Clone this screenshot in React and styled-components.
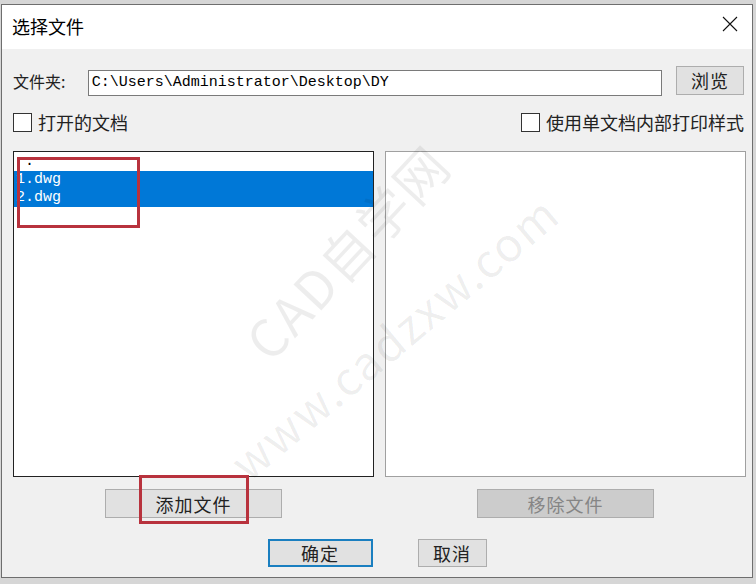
import React from 'react';
import styled, { createGlobalStyle } from 'styled-components';

const GlobalStyle = createGlobalStyle`
  html, body {
    margin: 0;
    padding: 0;
    background: #d6d6d6;
    width: 756px;
    height: 584px;
    overflow: hidden;
  }
`;

const cjk = `"Noto Sans CJK SC", "Noto Sans", sans-serif`;
const mono = `"Liberation Mono", "Noto Sans CJK SC", monospace`;

const Window = styled.div`
  position: relative;
  margin: 4px 0 0 1px;
  width: 750px;
  border: 1px solid #6e6e6e;
  background: #f0f0f0;
  font-family: ${cjk};
  color: #000;
  overflow: hidden;
`;

const TitleBar = styled.div`
  height: 44px;
  background: #fff;
  display: flex;
  align-items: center;
  justify-content: space-between;
  padding: 0 14px 0 10px;
`;

const Title = styled.div`
  font-size: 18px;
  line-height: 1;
  margin-top: -2px;
`;

const CloseButton = styled.div`
  width: 16px;
  height: 16px;
  display: flex;
  margin-top: -6px;
`;

const Body = styled.div`
  padding: 17px 8px 10px 11px;
  display: flex;
  flex-direction: column;
`;

const PathRow = styled.div`
  height: 30px;
  display: flex;
  align-items: center;
`;

const Label = styled.div`
  width: 75px;
  font-size: 16px;
  color: #222;
`;

const PathInput = styled.div`
  width: 571px;
  height: 24px;
  margin-top: 4px;
  border: 1px solid #7a7a7a;
  background: #fff;
  font-family: ${mono};
  font-size: 15px;
  line-height: 24px;
  padding-left: 3px;
  box-sizing: content-box;
  white-space: nowrap;
`;

const Button = styled.div`
  width: ${p => p.$w}px;
  height: ${p => p.$h}px;
  box-sizing: border-box;
  border: ${p => (p.$default ? '2px solid #1a7fc0' : '1px solid #adadad')};
  background: ${p => (p.$disabled ? '#cccccc' : '#e1e1e1')};
  color: ${p => (p.$disabled ? '#858585' : '#222')};
  font-size: 18px;
  display: flex;
  align-items: center;
  justify-content: center;
  letter-spacing: 1px;
`;

const PathButton = styled(Button)`
  margin-left: 14px;
  margin-top: -2px;
`;

const CheckRow = styled.div`
  margin-top: 16px;
  height: 20px;
  display: flex;
  align-items: center;
  justify-content: space-between;
`;

const Check = styled.label`
  display: flex;
  align-items: center;
  gap: 6px;
  font-size: 18px;
  color: #222;
  white-space: nowrap;
`;

const Box = styled.span`
  width: 19px;
  height: 19px;
  box-sizing: border-box;
  border: 1px solid #333;
  background: #fff;
`;

const Lists = styled.div`
  margin-top: 19px;
  display: flex;
  gap: 11px;
`;

const Column = styled.div`
  width: 361px;
  display: flex;
  flex-direction: column;
  align-items: center;
  gap: 12px;
`;

const ListBox = styled.div`
  width: 361px;
  height: 326px;
  box-sizing: border-box;
  border: 1px solid ${p => (p.$focused ? '#222' : '#a0a0a0')};
  background: #fff;
  padding-top: 1px;
`;

const Item = styled.div`
  height: 18px;
  line-height: 18px;
  padding-left: ${p => p.$indent || 2}px;
  font-family: ${mono};
  font-size: 15px;
  background: ${p => (p.$selected ? '#0078d7' : 'transparent')};
  color: ${p => (p.$selected ? '#fff' : '#000')};
`;

const Footer = styled.div`
  margin-top: 21px;
  display: flex;
  justify-content: center;
  gap: 45px;
  padding-right: 3px;
`;

const Mark = styled.div`
  position: absolute;
  left: ${p => p.$x}px;
  top: ${p => p.$y}px;
  box-sizing: border-box;
  width: ${p => p.$w}px;
  height: ${p => p.$h}px;
  border: 3px solid #b8323d;
  pointer-events: none;
`;

const Watermark = styled.div`
  position: absolute;
  left: ${p => p.$x}px;
  top: ${p => p.$y}px;
  transform: translate(-50%, -50%) rotate(${p => p.$deg}deg);
  font-family: ${cjk};
  font-size: ${p => p.$size}px;
  color: rgba(0, 0, 0, 0.07);
  white-space: nowrap;
  pointer-events: none;
  letter-spacing: 2px;
`;

export default function App() {
  return (
    <>
      <GlobalStyle />
      <Window>
        <TitleBar>
          <Title>选择文件</Title>
          <CloseButton>
            <svg width="16" height="16" viewBox="0 0 16 16">
              <path d="M1 1 L15 15 M15 1 L1 15" stroke="#111" strokeWidth="1.1" fill="none" />
            </svg>
          </CloseButton>
        </TitleBar>
        <Body>
          <PathRow>
            <Label>文件夹:</Label>
            <PathInput>C:\Users\Administrator\Desktop\DY</PathInput>
            <PathButton $w={68} $h={29}>浏览</PathButton>
          </PathRow>
          <CheckRow>
            <Check><Box />打开的文档</Check>
            <Check><Box />使用单文档内部打印样式</Check>
          </CheckRow>
          <Lists>
            <Column>
              <ListBox $focused>
                <Item $indent={11}>.</Item>
                <Item $selected>1.dwg</Item>
                <Item $selected>2.dwg</Item>
              </ListBox>
              <Button $w={177} $h={29}>添加文件</Button>
            </Column>
            <Column>
              <ListBox />
              <Button $w={177} $h={29} $disabled>移除文件</Button>
            </Column>
          </Lists>
          <Footer>
            <Button $w={105} $h={28} $default>确定</Button>
            <Button $w={69} $h={28}>取消</Button>
          </Footer>
        </Body>
        <Watermark $x={344} $y={246} $deg={-47} $size={52}>CAD自学网</Watermark>
        <Watermark $x={391} $y={331} $deg={-40} $size={46}>www.cadzxw.com</Watermark>
        <Mark $x={15} $y={152} $w={123} $h={71} />
        <Mark $x={137} $y={470} $w={110} $h={49} />
      </Window>
    </>
  );
}
